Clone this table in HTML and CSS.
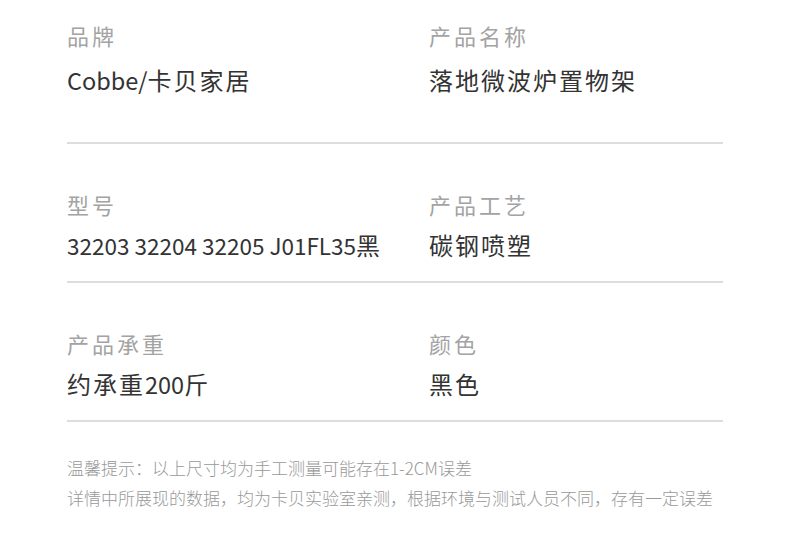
FILE: index.html
```html
<!doctype html>
<html>
    <head>
        <meta charset="utf-8" />
        <title>商品参数</title>
        <link rel="stylesheet" href="styles.css">
    </head>
    <body>
        <div class="params">
            <div class="row">
                <div class="cell">
                    <div class="label">品牌</div>
                    <div class="value"><span class="latin">Cobbe/</span>卡贝家居</div>
                </div>
                <div class="cell">
                    <div class="label">产品名称</div>
                    <div class="value">落地微波炉置物架</div>
                </div>
            </div>
            <div class="row">
                <div class="cell">
                    <div class="label">型号</div>
                    <div class="value"><span class="latin digits">32203 32204 32205 J01FL35</span>黑</div>
                </div>
                <div class="cell">
                    <div class="label">产品工艺</div>
                    <div class="value">碳钢喷塑</div>
                </div>
            </div>
            <div class="row">
                <div class="cell">
                    <div class="label">产品承重</div>
                    <div class="value">约承重<span class="latin">200</span>斤</div>
                </div>
                <div class="cell">
                    <div class="label">颜色</div>
                    <div class="value">黑色</div>
                </div>
            </div>
        </div>
        <div class="notes">
            <p>温馨提示：以上尺寸均为手工测量可能存在1-2CM误差</p>
            <p>详情中所展现的数据，均为卡贝实验室亲测，根据环境与测试人员不同，存有一定误差</p>
        </div>
    </body>
</html>
```

FILE: styles.css
```css
body {
    margin: 0;
    background: #fff;
    font-family: "Noto Sans CJK SC", "Noto Sans", sans-serif;
}
.params {
    margin: 0 67px;
    width: 656px;
}
.row {
    display: grid;
    grid-template-columns: 362px 1fr;
    border-bottom: 2px solid #ddd;
    padding: 44px 0 19px;
}
.row:first-child {
    padding-top: 19px;
    padding-bottom: 45px;
}
.label {
    font-size: 22px;
    letter-spacing: 3px;
    color: #a3a3a3;
    line-height: 32px;
}
.value {
    margin-top: 8px;
    font-size: 24px;
    letter-spacing: 2px;
    color: #333;
    line-height: 34px;
}
.row:first-child .value {
    margin-top: 12px;
}
.latin {
    font-size: 23.5px;
    letter-spacing: 0;
}
.digits {
    font-size: 22.5px;
}
.notes {
    margin: 35px 67px 0;
    font-size: 17px;
    font-weight: 300;
    color: #999;
}
.notes p {
    margin: 0 0 8px;
    line-height: 22px;
}
```
